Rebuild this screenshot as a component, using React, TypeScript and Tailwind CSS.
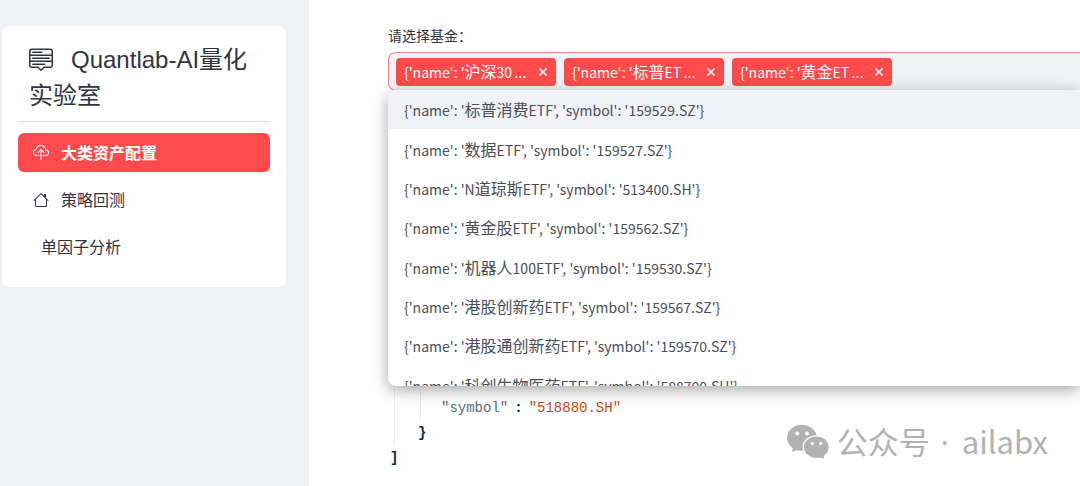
import { BsCloudUpload, BsHouse, BsMenuUp } from 'react-icons/bs'

const funds = [
    { name: '标普消费ETF', symbol: '159529.SZ' },
    { name: '数据ETF', symbol: '159527.SZ' },
    { name: 'N道琼斯ETF', symbol: '513400.SH' },
    { name: '黄金股ETF', symbol: '159562.SZ' },
    { name: '机器人100ETF', symbol: '159530.SZ' },
    { name: '港股创新药ETF', symbol: '159567.SZ' },
    { name: '港股通创新药ETF', symbol: '159570.SZ' },
    { name: '科创生物医药ETF', symbol: '588700.SH' },
]

const selected = ['沪深30', '标普ET', '黄金ET']

// Chinese characters are set one step larger than the Latin text around them
function MixedText({ text }: { text: string }) {
    return (
        <>
            {text.split(/([\u4e00-\u9fff]+)/).map((part, i) =>
                i % 2 === 1 ? (
                    <span key={i} className="text-[16px]">{part}</span>
                ) : (
                    part
                )
            )}
        </>
    )
}

function WechatIcon() {
    return (
        <svg viewBox="0 0 126 104" className="w-[42px] h-[35px]" fill="#b2b2b2" aria-hidden="true">
            <path d="M20 66 L15 83 L37 76 Z" />
            <ellipse cx="45" cy="41" rx="45" ry="39" />
            <circle cx="31" cy="28" r="6" fill="#fff" />
            <circle cx="60" cy="28" r="6" fill="#fff" />
            <ellipse cx="88" cy="69" rx="41" ry="36" fill="#fff" />
            <path d="M94 98 L112 104 L109 88 Z" />
            <ellipse cx="88" cy="69" rx="37" ry="32" />
            <circle cx="76" cy="58" r="5" fill="#fff" />
            <circle cx="101" cy="58" r="5" fill="#fff" />
        </svg>
    )
}

function Sidebar() {
    return (
        <aside className="w-[309px] shrink-0 bg-[#f0f2f6] pt-[26px] pl-[2px] pr-[23px]">
            <div className="bg-white rounded-lg px-4 pt-4 pb-[21px]">
                {/* Título do menu */}
                <h1 className="px-[11px] text-[24px] leading-[36px] text-[#31333f] font-['Liberation_Sans','Noto_Sans_CJK_SC',sans-serif]">
                    <BsMenuUp className="inline-block w-6 h-6 mr-[18px] align-[-3px]" />
                    Quantlab-AI量化实验室
                </h1>
                <hr className="mt-[7px] mb-[11px] border-[#dddee0]" />

                <nav className="flex flex-col gap-2 text-[16px] leading-[23px] text-[#31333f]">
                    <a href="#allocation" className="flex items-center gap-3 px-[15px] py-2 rounded-md bg-[#ff4b4b] text-white font-bold">
                        <BsCloudUpload className="w-4 h-4" />
                        大类资产配置
                    </a>
                    <a href="#backtest" className="flex items-center gap-3 px-[15px] py-2 rounded-md">
                        <BsHouse className="w-4 h-4" />
                        策略回测
                    </a>
                    <a href="#factor" className="flex items-center px-[23px] py-2 rounded-md">
                        单因子分析
                    </a>
                </nav>
            </div>
        </aside>
    )
}

function FundSelect() {
    return (
        <div>
            <label htmlFor="fund" className="block text-[14px] leading-[20px] mb-[7px]">
                请选择基金：
            </label>
            <div className="relative">
                <div className="flex items-center gap-2 h-[39px] pl-[7px] rounded-l-lg border border-r-0 border-[#ff8080] bg-[#f0f2f6]">
                    {selected.map((name) => (
                        <span key={name} className="flex items-center justify-between w-[160px] h-7 shrink-0 px-2 rounded bg-[#ff4b4b] text-white text-[14px] leading-[20px] whitespace-nowrap">
                            <span>
                                <MixedText text={`{'name': '${name}`} />
                                <span className="ml-[2px] text-[16px] font-['Open_Sans',sans-serif]">…</span>
                            </span>
                            <button type="button" aria-label={`移除 ${name}`} className="w-[10px] h-[10px]">
                                <svg viewBox="0 0 10 10" className="w-[10px] h-[10px]" stroke="currentColor" strokeWidth="1.6" fill="none">
                                    <path d="M1.5 1.5 L8.5 8.5 M8.5 1.5 L1.5 8.5" />
                                </svg>
                            </button>
                        </span>
                    ))}
                    <input id="fund" type="text" className="flex-1 min-w-0 bg-transparent outline-none" />
                </div>

                {/* Lista suspensa */}
                <div className="absolute top-[38px] left-0 right-0 h-[296px] overflow-hidden rounded-l-lg bg-white shadow-[0_4px_16px_rgba(0,0,0,0.35)]">
                    <ul role="listbox" aria-label="基金" className="grid grid-rows-8 h-[315px]">
                        {funds.map((fund, i) => (
                            <li
                                key={fund.symbol}
                                role="option"
                                aria-selected={i === 0}
                                className="flex items-center px-4 text-[14px] leading-[20px] text-[#4b4d58] aria-selected:bg-[#f0f2f6]"
                            >
                                <span>
                                    <MixedText text={`{'name': '${fund.name}', 'symbol': '${fund.symbol}'}`} />
                                </span>
                            </li>
                        ))}
                    </ul>
                </div>
            </div>
        </div>
    )
}

function JsonView() {
    return (
        <div className="mt-[290px] pl-[2px] text-[14px] leading-[25px] text-[#002b36] font-['Liberation_Mono',monospace]">
            <div className="ml-1 pl-[25px] border-l border-[#ebebeb]">
                <div className="pt-[15px] pl-5 border-l border-[#ebebeb]">
                    <span className="text-[#586e75]">"symbol"</span>
                    <span className="mx-[6px] font-bold">:</span>
                    <span className="text-[#cb4b16]">"518880.SH"</span>
                </div>
            </div>
            <div className="ml-1 pl-[23px] border-l border-[#ebebeb] font-bold">{'}'}</div>
            <div className="font-bold">]</div>
        </div>
    )
}

export default function App() {
    return (
        <div className="relative flex min-h-screen overflow-hidden bg-white text-[#31333f] font-['Noto_Sans_CJK_SC',sans-serif]">
            <Sidebar />
            <main className="flex-1 min-w-0 pl-[79px] pt-[25px]">
                <FundSelect />
                <JsonView />
            </main>

            {/* Marca d'água */}
            <div className="absolute right-8 bottom-6 flex items-center gap-2 text-[31px] leading-[40px] text-[#b2b2b2]">
                <WechatIcon />
                <span>
                    公众号 <span className="ml-1 mr-[6px] font-['Open_Sans',sans-serif]">·</span> ailabx
                </span>
            </div>
        </div>
    )
}
